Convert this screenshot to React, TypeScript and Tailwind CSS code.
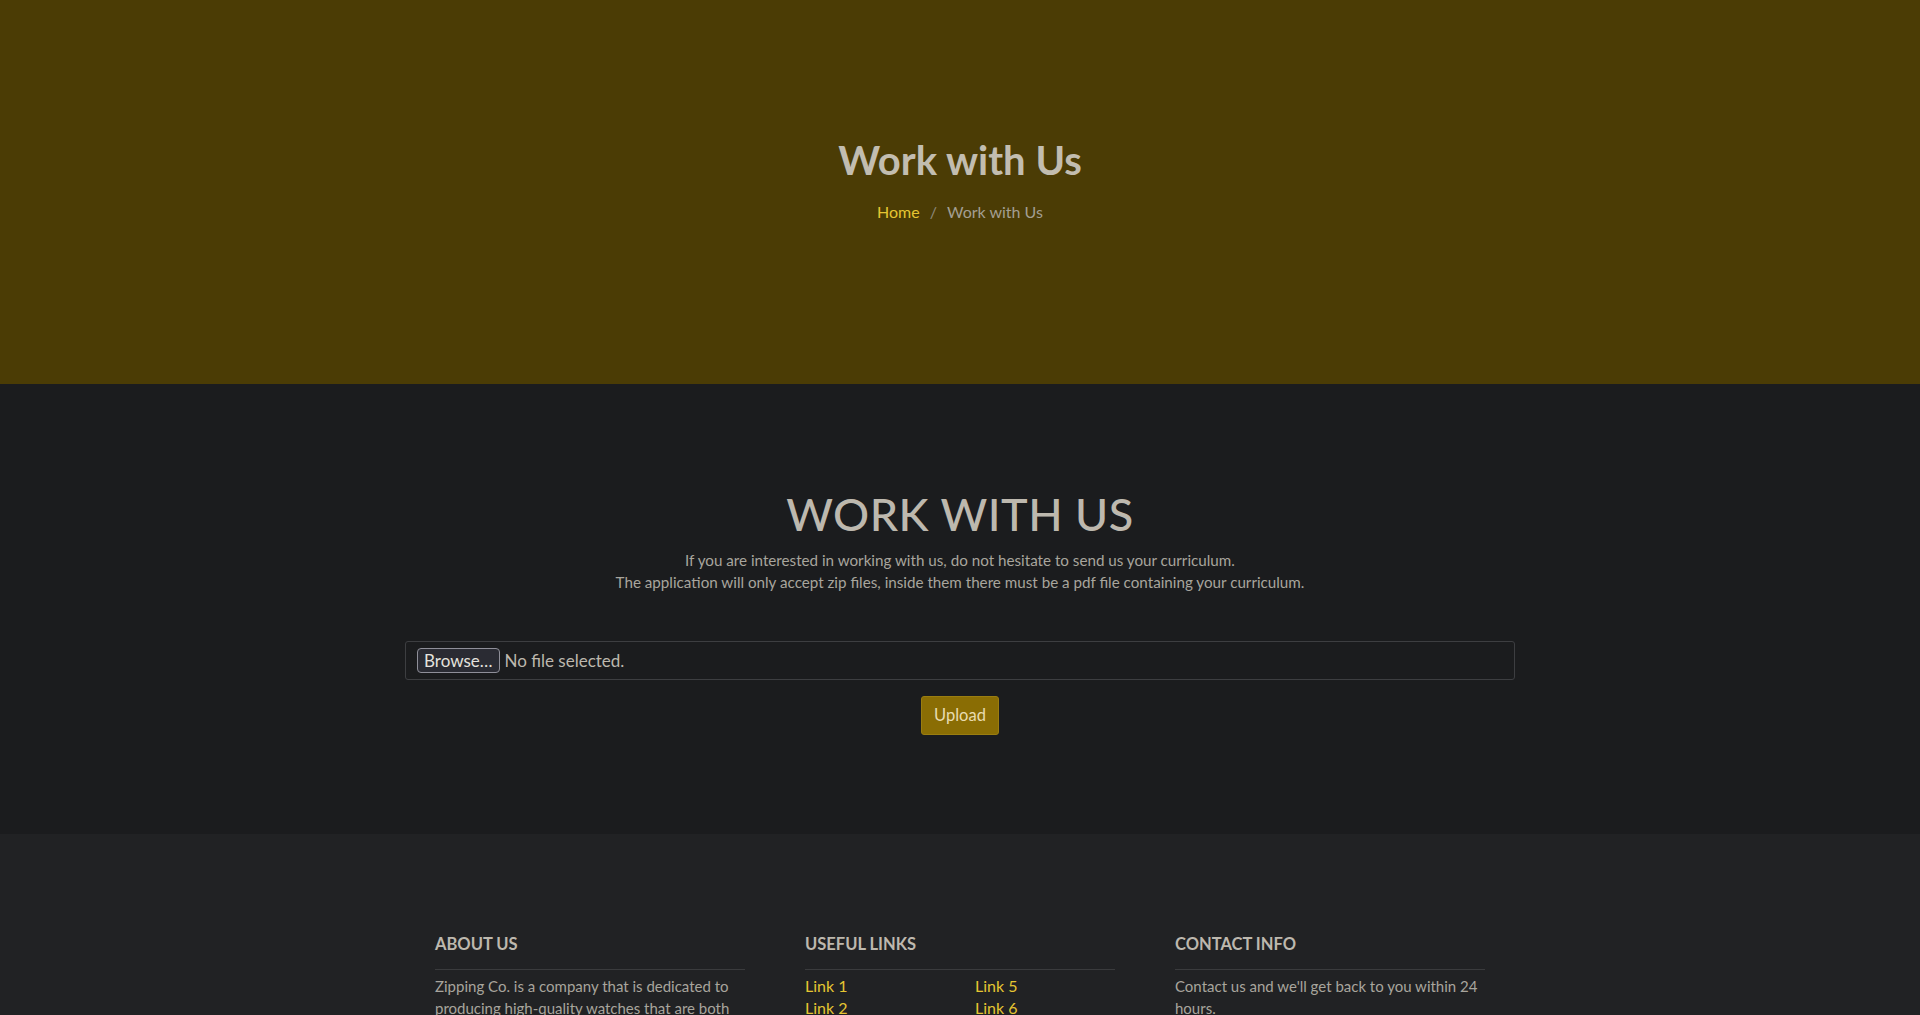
import React from 'react'

const font = { fontFamily: 'Lato, "Noto Sans", sans-serif' }

function FooterCol({ title, children }: { title: string; children: React.ReactNode }) {
  return (
    <div className="w-[310px]">
      <h5 className="text-[16.5px] font-bold text-[#bdb8ae] leading-[22px] uppercase">{title}</h5>
      <hr className="mt-[14px] mb-[5px] border-t border-[#3a3b3d]" />
      {children}
    </div>
  )
}

export default function App() {
  return (
    <div className="min-h-screen bg-[#212224]" style={font}>
      {/* Page header */}
      <section className="h-[384px] bg-[#4b3c05] flex flex-col items-center pt-[136px]">
        <h1 className="text-[40px] font-bold text-[#c2bdb0] leading-[48px]">Work with Us</h1>
        <nav className="mt-[17px] flex items-center gap-[10px] text-[16px] leading-[22px]">
          <a className="text-[#e5c532]">Home</a>
          <span className="text-[#8e8a7c]">/</span>
          <span className="text-[#a39f92]">Work with Us</span>
        </nav>
      </section>

      {/* Upload form */}
      <section className="h-[450px] bg-[#1b1c1e] flex flex-col items-center pt-[100px]">
        <h2 className="text-[45px] font-medium text-[#bdb8ae] leading-[60px] tracking-[0.5px]">WORK WITH US</h2>
        <p className="mt-[5px] text-[15.2px] leading-[22px] text-[#a8a59d] text-center">
          If you are interested in working with us, do not hesitate to send us your curriculum.
          <br />
          The application will only accept zip files, inside them there must be a pdf file containing your curriculum.
        </p>
        <div className="mt-[48px] w-[1110px] h-[39px] border border-[#3d3e41] rounded-[3px] flex items-center px-[11px] gap-[5px]">
          <button className="h-[25px] px-[6px] bg-[#2a2b33] border border-[#8f8f99] rounded-[4px] text-[17px] text-[#e4e2de] leading-none">
            Browse…
          </button>
          <span className="text-[17px] text-[#bdb8ae]">No file selected.</span>
        </div>
        <button className="mt-[16px] h-[39px] w-[78px] rounded-[3px] bg-[#8a6d04] border border-[#9a7d10] text-[16.5px] text-[#e8dcb0]">
          Upload
        </button>
      </section>

      {/* Footer */}
      <footer className="bg-[#212224] pt-[99px] pb-[60px] flex justify-center gap-[60px] text-[15px] leading-[22px]">
        <FooterCol title="About Us">
          <p className="text-[#a8a59d]">
            Zipping Co. is a company that is dedicated to producing high-quality watches that are both stylish and
            functional.
          </p>
        </FooterCol>
        <FooterCol title="Useful Links">
          <div className="grid grid-cols-[170px_140px] text-[#e5c532] text-[16px]">
            <a>Link 1</a>
            <a>Link 5</a>
            <a>Link 2</a>
            <a>Link 6</a>
            <a>Link 3</a>
            <a>Link 7</a>
            <a>Link 4</a>
            <a>Link 8</a>
          </div>
        </FooterCol>
        <FooterCol title="Contact Info">
          <p className="text-[#a8a59d]">Contact us and we'll get back to you within 24 hours.</p>
        </FooterCol>
      </footer>
    </div>
  )
}
